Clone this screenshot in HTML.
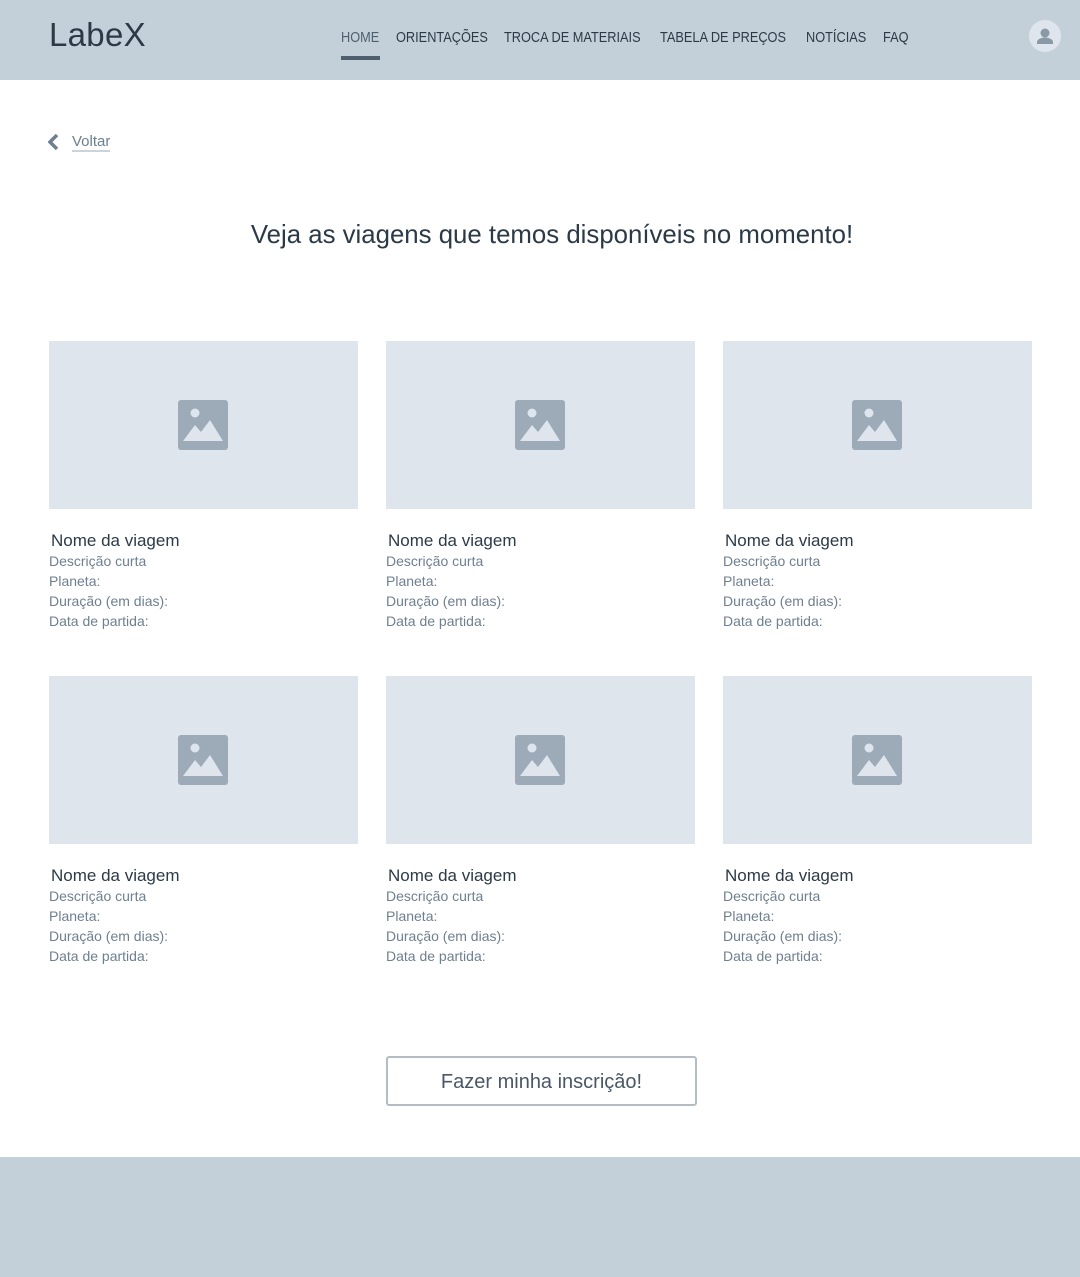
<!DOCTYPE html>
<html><head><meta charset="utf-8"><style>
*{margin:0;padding:0;box-sizing:border-box}
body{width:1080px;height:1277px;position:relative;background:#fff;font-family:"Liberation Sans",sans-serif;overflow:hidden}
.a{position:absolute;white-space:nowrap}
header{position:absolute;left:0;top:0;width:1080px;height:80px;background:#c4d0d9}
.logo{left:49px;top:16px;font-size:33px;color:#2c3a47;letter-spacing:0.3px}
.nav{top:30px;font-size:14.5px;color:#2c3a47;transform:scaleX(0.88);transform-origin:left top}
.ul{left:341px;top:56px;width:39px;height:4px;background:#4f5f6d}
.av{left:1029px;top:20px;width:32px;height:32px;border-radius:50%;background:#dfe5ec}
.img{width:309px;height:168px;background:#dee5ed}
.img svg{position:absolute;left:129px;top:59px}
.t{font-size:17px;color:#2c3a47}
.d{font-size:14px;color:#6e7f90;line-height:20px}
footer{position:absolute;left:0;top:1157px;width:1080px;height:120px;background:#c4d0d9}
</style></head><body>
<header>
<div class="a logo">LabeX</div>
<div class="a nav" style="left:341px;color:#4f5f6d">HOME</div>
<div class="a nav" style="left:396px">ORIENTAÇÕES</div>
<div class="a nav" style="left:504px">TROCA DE MATERIAIS</div>
<div class="a nav" style="left:660px">TABELA DE PREÇOS</div>
<div class="a nav" style="left:806px">NOTÍCIAS</div>
<div class="a nav" style="left:883px">FAQ</div>
<div class="a ul"></div>
<div class="a av"><svg width="32" height="32" viewBox="0 0 32 32"><circle cx="16" cy="13" r="4.5" fill="#8a99a8"/><path d="M8 24v-2c0-3 5-4.5 8-4.5s8 1.5 8 4.5v2z" fill="#8a99a8"/></svg></div>
</header>
<svg class="a" style="left:48px;top:134px" width="12" height="16" viewBox="0 0 12 16"><path d="M9 1L2 8l7 7" stroke="#6e7f90" stroke-width="3.5" fill="none"/></svg>
<div class="a" style="left:72px;top:134px;font-size:15px;color:#6e7f90;border-bottom:2px solid #cdd3da;line-height:16px">Voltar</div>
<div class="a" style="left:12px;width:1080px;text-align:center;top:221px;font-size:25.8px;color:#2c3a47">Veja as viagens que temos disponíveis no momento!</div>

<div class="a img" style="left:49px;top:341px"><svg width="50" height="50" viewBox="0 0 50 50"><rect width="50" height="50" rx="3" fill="#9daab7"/><circle cx="17" cy="13" r="4.5" fill="#dee5ed"/><path d="M5 41l12-16 6 7 9-12 13 21z" fill="#dee5ed"/></svg></div>
<div class="a img" style="left:386px;top:341px"><svg width="50" height="50" viewBox="0 0 50 50"><rect width="50" height="50" rx="3" fill="#9daab7"/><circle cx="17" cy="13" r="4.5" fill="#dee5ed"/><path d="M5 41l12-16 6 7 9-12 13 21z" fill="#dee5ed"/></svg></div>
<div class="a img" style="left:723px;top:341px"><svg width="50" height="50" viewBox="0 0 50 50"><rect width="50" height="50" rx="3" fill="#9daab7"/><circle cx="17" cy="13" r="4.5" fill="#dee5ed"/><path d="M5 41l12-16 6 7 9-12 13 21z" fill="#dee5ed"/></svg></div>
<div class="a img" style="left:49px;top:676px"><svg width="50" height="50" viewBox="0 0 50 50"><rect width="50" height="50" rx="3" fill="#9daab7"/><circle cx="17" cy="13" r="4.5" fill="#dee5ed"/><path d="M5 41l12-16 6 7 9-12 13 21z" fill="#dee5ed"/></svg></div>
<div class="a img" style="left:386px;top:676px"><svg width="50" height="50" viewBox="0 0 50 50"><rect width="50" height="50" rx="3" fill="#9daab7"/><circle cx="17" cy="13" r="4.5" fill="#dee5ed"/><path d="M5 41l12-16 6 7 9-12 13 21z" fill="#dee5ed"/></svg></div>
<div class="a img" style="left:723px;top:676px"><svg width="50" height="50" viewBox="0 0 50 50"><rect width="50" height="50" rx="3" fill="#9daab7"/><circle cx="17" cy="13" r="4.5" fill="#dee5ed"/><path d="M5 41l12-16 6 7 9-12 13 21z" fill="#dee5ed"/></svg></div>

<div class="a" style="left:49px;top:531px"><div class="t" style="margin-left:2px">Nome da viagem</div><div class="d">Descrição curta<br>Planeta:<br>Duração (em dias):<br>Data de partida:</div></div>
<div class="a" style="left:386px;top:531px"><div class="t" style="margin-left:2px">Nome da viagem</div><div class="d">Descrição curta<br>Planeta:<br>Duração (em dias):<br>Data de partida:</div></div>
<div class="a" style="left:723px;top:531px"><div class="t" style="margin-left:2px">Nome da viagem</div><div class="d">Descrição curta<br>Planeta:<br>Duração (em dias):<br>Data de partida:</div></div>
<div class="a" style="left:49px;top:866px"><div class="t" style="margin-left:2px">Nome da viagem</div><div class="d">Descrição curta<br>Planeta:<br>Duração (em dias):<br>Data de partida:</div></div>
<div class="a" style="left:386px;top:866px"><div class="t" style="margin-left:2px">Nome da viagem</div><div class="d">Descrição curta<br>Planeta:<br>Duração (em dias):<br>Data de partida:</div></div>
<div class="a" style="left:723px;top:866px"><div class="t" style="margin-left:2px">Nome da viagem</div><div class="d">Descrição curta<br>Planeta:<br>Duração (em dias):<br>Data de partida:</div></div>

<div class="a" style="left:386px;top:1056px;width:311px;height:50px;border:2px solid #b4bcc4;border-radius:3px;text-align:center;line-height:48px;font-size:20px;color:#4a5866">Fazer minha inscrição!</div>
<footer></footer>
</body></html>
